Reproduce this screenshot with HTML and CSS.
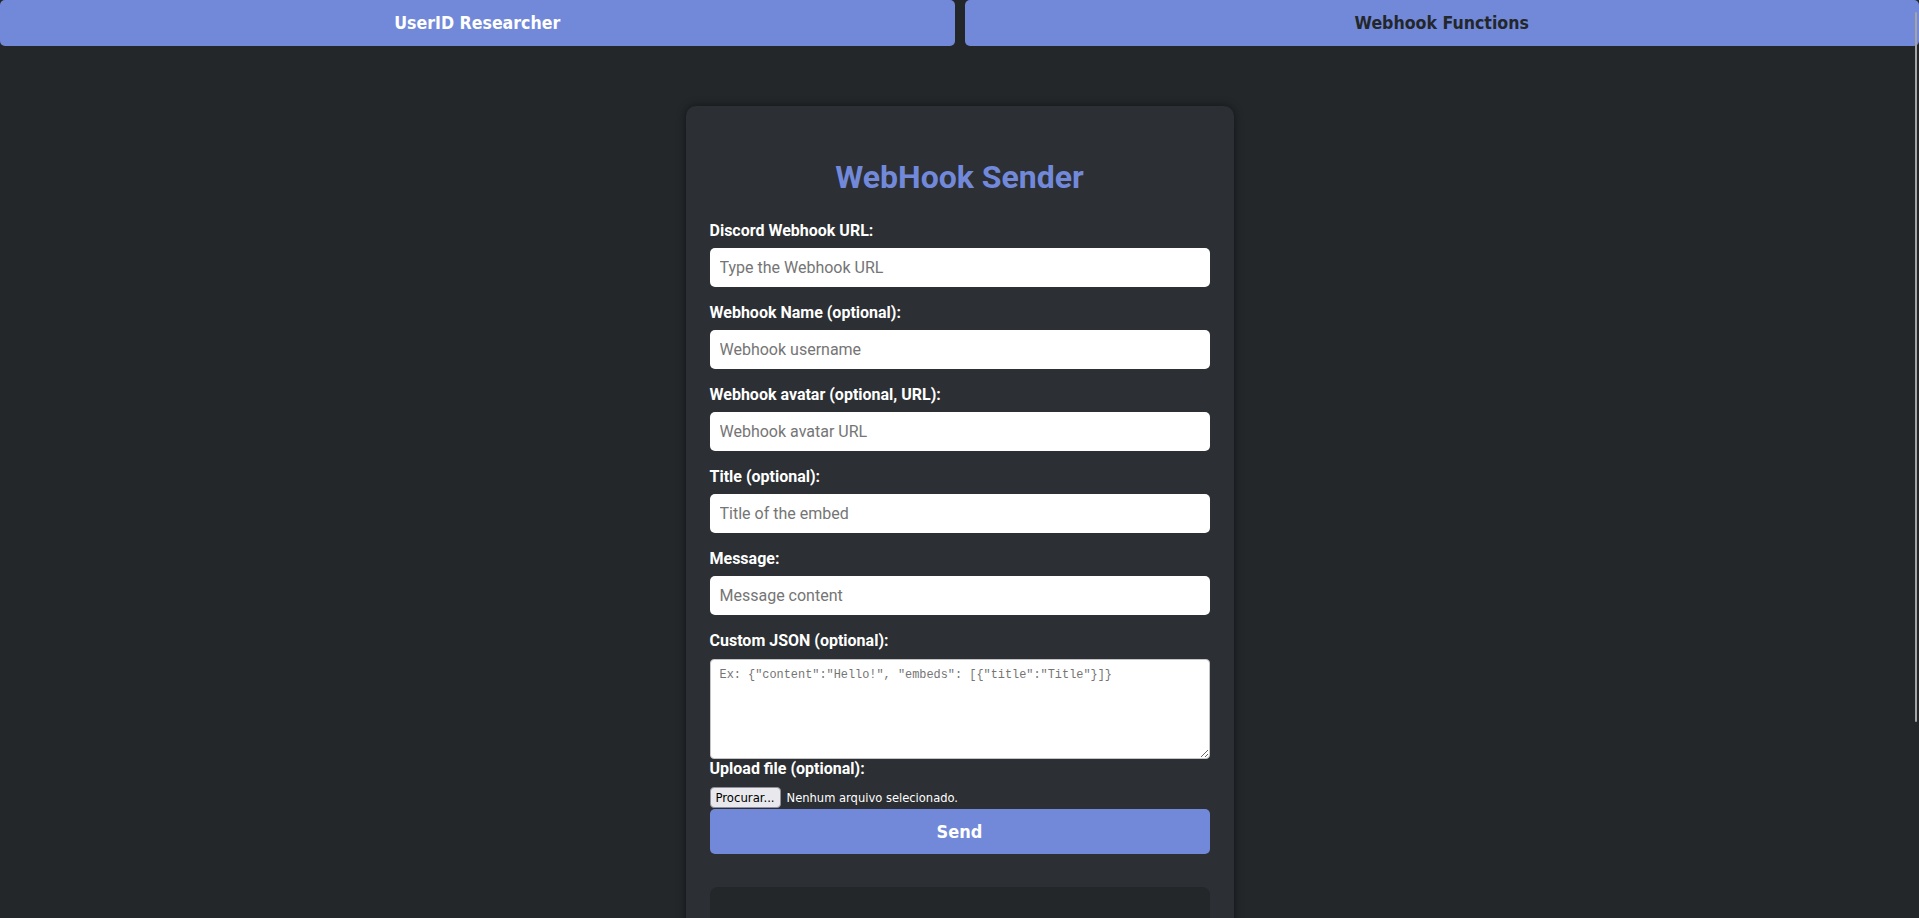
FILE: index.html
```html
<!DOCTYPE html>
<html lang="en">
<head>
<meta charset="utf-8">
<title>WebHook Sender</title>
<link rel="stylesheet" href="styles.css">
</head>
<body>
<nav class="nav">
  <button class="nav-btn nav-btn-active" type="button">UserID Researcher</button>
  <button class="nav-btn nav-btn-dark" type="button">Webhook Functions</button>
</nav>
<main class="card">
  <h1 class="title">WebHook Sender</h1>
  <form class="form">
    <label class="label" for="url">Discord Webhook URL:</label>
    <input class="field" id="url" type="text" placeholder="Type the Webhook URL">
    <label class="label" for="name">Webhook Name (optional):</label>
    <input class="field" id="name" type="text" placeholder="Webhook username">
    <label class="label" for="avatar">Webhook avatar (optional, URL):</label>
    <input class="field" id="avatar" type="text" placeholder="Webhook avatar URL">
    <label class="label" for="etitle">Title (optional):</label>
    <input class="field" id="etitle" type="text" placeholder="Title of the embed">
    <label class="label" for="msg">Message:</label>
    <input class="field" id="msg" type="text" placeholder="Message content">
    <label class="label" for="json">Custom JSON (optional):</label>
    <textarea class="json" id="json" placeholder='Ex: {"content":"Hello!", "embeds": [{"title":"Title"}]}'></textarea>
    <span class="label">Upload file (optional):</span>
    <div class="file-row">
      <span class="file-btn">Procurar...</span>
      <span class="file-name">Nenhum arquivo selecionado.</span>
    </div>
    <button class="send" type="button">Send</button>
  </form>
  <div class="result"></div>
</main>
<div class="scroll-thumb"></div>
</body>
</html>
```
FILE: styles.css
```css
html {
  scrollbar-width: none;
}
html::-webkit-scrollbar {
  display: none;
}
body {
  margin: 0;
  background: #23272a;
  font-family: Roboto, "Noto Sans", sans-serif;
  color: #ffffff;
}
.nav {
  display: flex;
  gap: 10px;
}
.nav-btn {
  flex: 1;
  height: 46px;
  border: none;
  border-radius: 5px;
  background: #7289da;
  font-family: "DejaVu Sans", sans-serif;
  font-stretch: condensed;
  font-weight: 700;
  font-size: 17.6px;
  padding: 0;
}
.nav-btn-active {
  color: #ffffff;
}
.nav-btn-dark {
  color: #23272a;
}
.card {
  width: 500px;
  margin: 60px auto 0;
  padding: 32px 24px 40px;
  background: #2c2f33;
  border-radius: 10px;
  box-shadow: 0 0 10px rgba(0, 0, 0, 0.45);
}
.title {
  margin: 21px 0 24px;
  text-align: center;
  color: #7289da;
  font-size: 32px;
  font-weight: 700;
  line-height: 37.5px;
}
.form {
  display: flex;
  flex-direction: column;
}
.label {
  display: block;
  font-size: 16px;
  font-weight: 700;
  line-height: 19px;
  margin-bottom: 8px;
  color: #ffffff;
}
.field {
  box-sizing: border-box;
  width: 100%;
  height: 39px;
  margin: 0 0 16px;
  padding: 0 10px;
  border: none;
  border-radius: 5px;
  background: #ffffff;
  font-family: Roboto, sans-serif;
  font-size: 16px;
  color: #222;
}
.field::placeholder {
  color: #757575;
}
.json {
  box-sizing: border-box;
  width: 100%;
  height: 100px;
  margin: 1px 0 0;
  padding: 8px 9px;
  border: 1px solid #c4c4c4;
  border-radius: 4px;
  background: #ffffff;
  font-family: "Liberation Mono", "DejaVu Sans Mono", monospace;
  font-size: 11.9px;
  resize: vertical;
}
.json::placeholder {
  color: #757575;
}
.file-row {
  display: flex;
  align-items: center;
  height: 23px;
  gap: 6px;
}
.file-btn {
  box-sizing: border-box;
  height: 21px;
  display: flex;
  align-items: center;
  padding: 0 5px;
  background: #e9e9ed;
  border: 1px solid #8f8f9d;
  border-radius: 4px;
  color: #000000;
  font-family: "DejaVu Sans", sans-serif;
  font-stretch: condensed;
  font-size: 13px;
}
.file-name {
  color: #ffffff;
  font-family: "DejaVu Sans", sans-serif;
  font-stretch: condensed;
  font-size: 12.8px;
}
.send {
  height: 45px;
  width: 100%;
  border: none;
  border-radius: 5px;
  background: #7289da;
  color: #ffffff;
  font-family: "DejaVu Sans", sans-serif;
  font-stretch: condensed;
  font-weight: 700;
  font-size: 18px;
  padding: 0;
}
.result {
  margin-top: 33px;
  min-height: 200px;
  background: #23272a;
  border-radius: 8px;
}
.scroll-thumb {
  position: fixed;
  top: 12px;
  right: 2px;
  width: 2px;
  height: 710px;
  background: #a4a4a4;
  border-radius: 1px;
}
```
